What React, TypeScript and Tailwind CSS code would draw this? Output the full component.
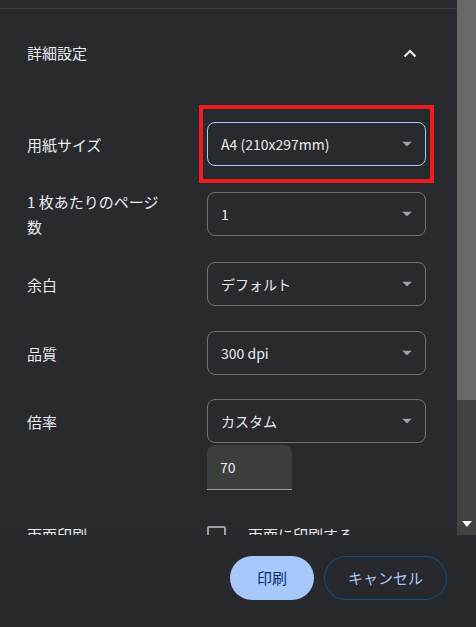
import React from 'react'

const Caret = () => (
  <svg width="10" height="5" viewBox="0 0 10 5" className="absolute right-[13px] top-1/2 -translate-y-1/2">
    <path d="M0 0h10L5 5z" fill="#9aa0a6" />
  </svg>
)

const Select = ({ value, focused }: { value: string; focused?: boolean }) => (
  <div
    className={`relative h-[44px] w-[219px] shrink-0 rounded-[8px] border flex items-center pl-[13px] text-[14px] text-[#e8eaed] ${
      focused ? 'border-[#a8c7fa]' : 'border-[#6f7175]'
    }`}
  >
    {value}
    <Caret />
  </div>
)

const Row = ({ label, children, h }: { label: React.ReactNode; children: React.ReactNode; h: string }) => (
  <div className={`flex items-center ${h}`}>
    <div className="w-[207px] shrink-0 pl-[27px] text-[15px] leading-[25px] text-[#e8eaed]">{label}</div>
    {children}
  </div>
)

export default function App() {
  return (
    <div className="w-[476px] h-[627px] bg-[#292a2d] overflow-hidden flex flex-col" style={{ fontFamily: '"Noto Sans CJK JP", "Noto Sans", sans-serif' }}>
      <div className="h-[535px] flex overflow-hidden">
        <div className="flex-1 overflow-hidden">
          <div className="h-[9px] border-b border-[#3c3d40]" />
          <div className="flex items-center justify-between h-[88px] pl-[27px] pr-[40px]">
            <span className="text-[15px] text-[#e8eaed]">詳細設定</span>
            <svg width="14" height="9" viewBox="0 0 14 9"><path d="M1.5 7.5L7 2l5.5 5.5" stroke="#e8eaed" strokeWidth="2.2" fill="none" /></svg>
          </div>
          <div className="flex flex-col">
            <Row label="用紙サイズ" h="h-[70px] mt-[12px]">
              <div className="relative -ml-[8px] border-[4px] border-[#ed1c24] p-[4px] h-[78px] w-[235px] shrink-0 flex items-center">
                <Select value="A4 (210x297mm)" focused />
              </div>
            </Row>
            <Row label={<>1 枚あたりのページ<br />数</>} h="h-[70px]">
              <Select value="1" />
            </Row>
            <Row label="余白" h="h-[70px]">
              <Select value="デフォルト" />
            </Row>
            <Row label="品質" h="h-[68px]">
              <Select value="300 dpi" />
            </Row>
            <Row label="倍率" h="h-[68px]">
              <Select value="カスタム" />
            </Row>
            <div className="pl-[207px] -mt-[10px]">
              <div className="w-[85px] h-[45px] bg-[#3c3d3f] rounded-t-[8px] border-b border-[#9aa0a6] flex items-center pl-[13px] text-[14px] text-[#e8eaed]">70</div>
            </div>
            <div className="flex items-center mt-[34px]">
              <div className="w-[207px] shrink-0 pl-[27px] text-[15px] text-[#e8eaed]">両面印刷</div>
              <div className="w-[19px] h-[19px] border-2 border-[#9aa0a6] rounded-[2px]" />
              <span className="ml-[22px] text-[15px] text-[#e8eaed]">両面に印刷する</span>
            </div>
          </div>
        </div>
        <div className="w-[19px] bg-[#424242] flex flex-col justify-between items-center">
          <div className="w-full h-[400px] bg-[#686868]" />
          <svg width="10" height="6" viewBox="0 0 10 6" className="mb-[8px]"><path d="M0 0h10L5 6z" fill="#ffffff" /></svg>
        </div>
      </div>
      <div className="flex-1 bg-[#28292c] flex justify-end items-start pt-[21px] pr-[29px] gap-[10px]">
        <button className="w-[84px] h-[44px] rounded-full bg-[#a8c7fa] text-[#062e6f] text-[15px]">印刷</button>
        <button className="w-[123px] h-[44px] rounded-full border border-[#0b5490] text-[#a8c7fa] text-[15px]">キャンセル</button>
      </div>
    </div>
  )
}
